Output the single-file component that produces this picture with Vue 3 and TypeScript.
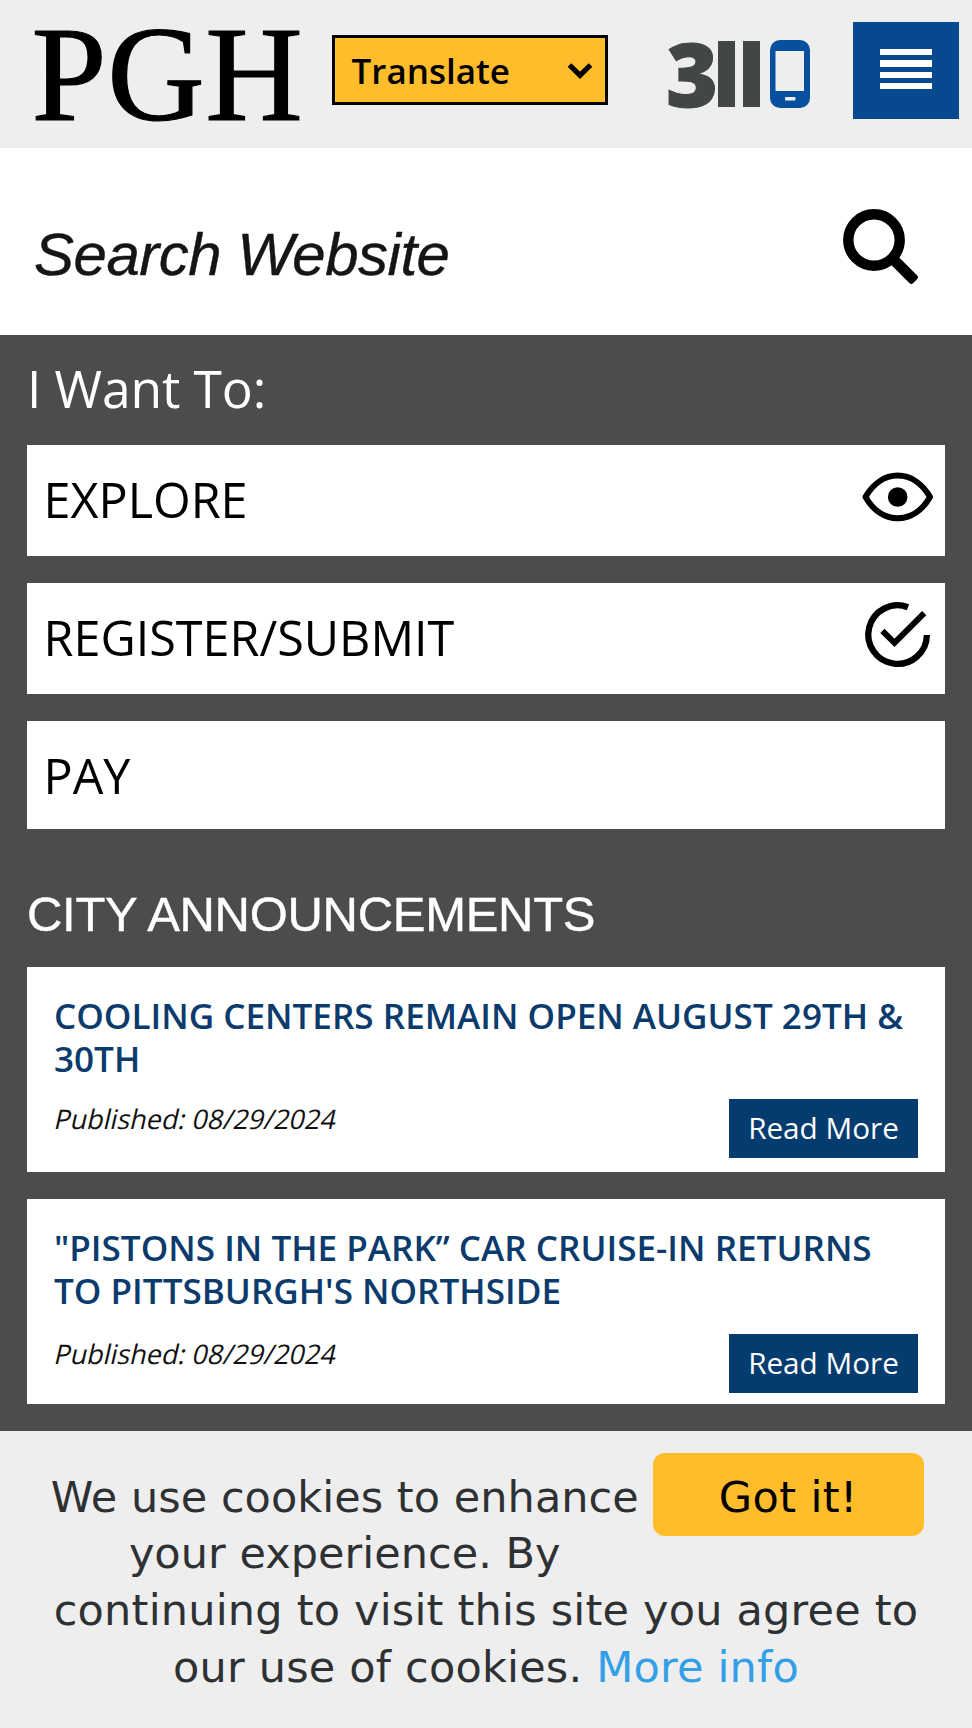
<script setup lang="ts">
interface Action {
  label: string
  icon?: 'eye' | 'check'
}

interface Announcement {
  id: number
  lines: string[]
  published: string
}

const actions: Action[] = [
  { label: 'EXPLORE', icon: 'eye' },
  { label: 'REGISTER/SUBMIT', icon: 'check' },
  { label: 'PAY' },
]

const announcements: Announcement[] = [
  { id: 1, lines: ['COOLING CENTERS REMAIN OPEN AUGUST 29TH &', '30TH'], published: '08/29/2024' },
  { id: 2, lines: ['"PISTONS IN THE PARK” CAR CRUISE-IN RETURNS', "TO PITTSBURGH'S NORTHSIDE"], published: '08/29/2024' },
]
</script>

<template>
  <div class="page">
    <header class="top">
      <div class="logo">PGH</div>
      <button class="translate" type="button">
        <span>Translate</span>
        <svg width="26" height="18" viewBox="0 0 26 18"><path d="M2.5 3 13 13.3 23.5 3" fill="none" stroke="#000" stroke-width="5.2" /></svg>
      </button>
      <div class="three">
        <span class="digit">3</span>
        <i class="bar"></i><i class="bar"></i>
        <svg class="phone" width="40" height="68" viewBox="0 0 40 68">
          <rect width="40" height="68" rx="10" fill="#06509f" />
          <rect x="5.5" y="11" width="28.5" height="40" fill="#eee" />
          <rect x="15" y="57" width="10.5" height="3.5" rx="1" fill="#eee" />
        </svg>
      </div>
      <button class="menu" type="button" aria-label="Menu"><i v-for="n in 4" :key="n"></i></button>
    </header>

    <div class="search">
      <span class="placeholder">Search Website</span>
      <svg class="glass" width="78" height="78" viewBox="0 0 78 78">
        <circle cx="32" cy="32" r="25.7" fill="none" stroke="#000" stroke-width="10.4" />
        <path d="M52.5 44.8 75 67.3Q77 69.3 75 71.3L71.3 75Q69.3 77 67.3 75L44.8 52.5Z" />
      </svg>
    </div>

    <main>
      <h2 class="want">I Want To:</h2>
      <nav class="actions">
        <a v-for="a in actions" :key="a.label" class="action">
          <span>{{ a.label }}</span>
          <svg v-if="a.icon === 'eye'" width="72" height="111" viewBox="0 0 72 111">
            <path d="M3.5 52C11 39 22.5 30.6 35.7 30.6S60.5 39 68 52C60.5 65 49 73.3 35.7 73.3S11 65 3.5 52Z" fill="none" stroke="#000" stroke-width="6" stroke-linejoin="round" />
            <circle cx="35.7" cy="52" r="9.8" />
          </svg>
          <svg v-else-if="a.icon === 'check'" width="72" height="111" viewBox="0 0 72 111">
            <path d="M46 24.2A29.3 29.3 0 1 0 64.9 52" fill="none" stroke="#000" stroke-width="6.3" />
            <path d="M20.4 47.8 32.5 59.8 62.2 30.2" fill="none" stroke="#000" stroke-width="6" />
          </svg>
        </a>
      </nav>

      <h2 class="city">CITY ANNOUNCEMENTS</h2>
      <article v-for="n in announcements" :key="n.id" class="card">
        <h3><span v-for="l in n.lines" :key="l">{{ l }}</span></h3>
        <footer>
          <span class="date">Published: {{ n.published }}</span>
          <a class="more">Read More</a>
        </footer>
      </article>
    </main>

    <aside class="cookies">
      <button class="got" type="button">Got it!</button>
      <span class="narrow">We use cookies to enhance<br>your experience. By<br></span>
      <span class="wide">continuing to visit this site you agree to<br>our use of cookies. <a>More info</a></span>
    </aside>
  </div>
</template>

<style>
body { margin: 0; overflow: hidden; }
</style>

<style scoped>
.page { width: 972px; height: 1728px; overflow: hidden; background: #fff; font-family: "Open Sans", sans-serif; color: #000; }
button { border: 0; padding: 0; margin: 0; box-sizing: border-box; font: inherit; color: inherit; }
h2, h3 { margin: 0; font-weight: 400; }

.top { display: flex; height: 147.5px; background: #eee; }
.logo { width: 300px; padding: 1px 0 0 31.5px; box-sizing: border-box; font: 135px/147px "Liberation Serif", serif; letter-spacing: .6px; white-space: nowrap; -webkit-text-stroke: 1.2px #000; }
.translate { display: flex; align-items: center; justify-content: space-between; width: 275.5px; height: 70px; margin: 35px 0 0 32px; padding: 0 11.5px 0 16.5px; border: 3px solid #000; background: #ffbc2b; font-weight: 600; font-size: 35px; line-height: 64px; }
.translate span { padding-top: 1px; }
.translate svg { margin-top: 2px; }
.three { display: flex; align-items: flex-start; width: 145px; margin: 40px 0 0 58.5px; }
.digit { width: 52px; height: 68px; color: #424646; font-weight: 800; font-size: 89px; line-height: 65px; -webkit-text-stroke: 1px #424646; }
.bar { width: 17px; height: 66px; margin: 1px 7.5px 0 0; background: #424646; }
.phone { margin-left: 3px; }
.menu { display: flex; flex-direction: column; gap: 5px; width: 105.5px; height: 97px; margin: 21.5px 13.5px 0 auto; padding: 27.5px 27px 0; background: #06498f; }
.menu i { height: 6.3px; background: #fff; }

.search { display: flex; justify-content: space-between; height: 187.5px; box-sizing: border-box; padding: 60px 52px 0 34px; }
.placeholder { margin-top: 15px; font: italic 60px/64px "Liberation Sans", sans-serif; letter-spacing: -.5px; color: #151515; -webkit-text-stroke: .4px #151515; }

main { height: 1096px; padding: 0 27px; background: #4c4c4c; overflow: hidden; color: #fff; }
.want { height: 110px; font-size: 51.5px; line-height: 107px; letter-spacing: -.1px; }
.actions { display: grid; gap: 27px; grid-template-rows: 111px 111px 108px; color: #000; }
.action { display: flex; justify-content: space-between; padding: 0 11px 0 16.5px; background: #fff; font-size: 48.5px; line-height: 108px; }
.city { height: 138px; padding-top: 55px; box-sizing: border-box; font: 49px/60px "Liberation Sans", sans-serif; letter-spacing: -.3px; -webkit-text-stroke: .4px #fff; white-space: nowrap; }
.card { display: flex; flex-direction: column; height: 205px; box-sizing: border-box; padding: 26.5px 27px 0; margin-bottom: 27px; background: #fff; color: #0b3b6c; }
.card h3 { font-weight: 600; font-size: 35.08px; line-height: 43px; white-space: nowrap; }
.card h3 span { display: block; }
.card footer { display: flex; justify-content: space-between; margin-top: 19.5px; color: #111; }
.card + .card footer { margin-top: 22.5px; }
.date { height: 37px; padding: 1px 0 0 1.5px; font-size: 27px; font-weight: 400; line-height: 37px; transform: skewX(-13deg); }
.more { width: 189px; height: 59px; background: #043c70; color: #fff; font-size: 29.7px; line-height: 58px; text-align: center; }

.cookies { height: 297px; box-sizing: border-box; padding: 37.5px 48.5px 0; background: #eee; color: #2e3133; font: 43px/56.9px "DejaVu Sans", sans-serif; text-align: center; white-space: nowrap; }
.got { float: right; width: 270.5px; height: 83.5px; margin: -16px 0 0 12px; border-radius: 12px; background: #ffbc2b; color: #000; letter-spacing: .4px; line-height: 83px; padding-top: 3px; }
.narrow { letter-spacing: .04px; }
.wide { letter-spacing: .2px; }
.cookies a { color: #329fe6; }
</style>
